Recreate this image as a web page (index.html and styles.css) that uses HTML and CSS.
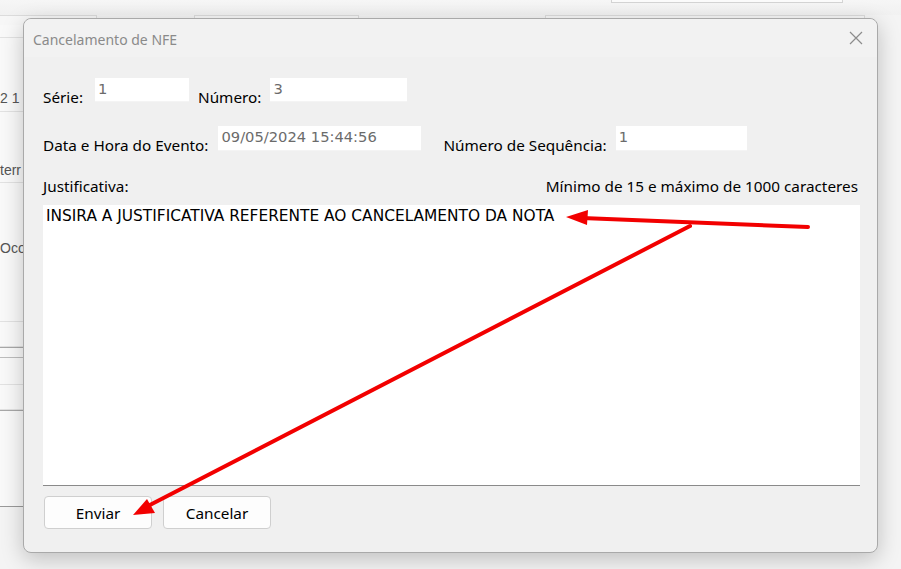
FILE: index.html
```html
<!DOCTYPE html>
<html lang="pt-BR">
<head>
    <meta charset="UTF-8">
    <meta name="viewport" content="width=device-width, initial-scale=1.0">
    <title>Cancelamento de NFE</title>
    <link rel="stylesheet" href="styles.css">
</head>
<body>
    <!-- app window behind the dialog -->
    <div class="backdrop">
        <div class="top-strip">
            <div class="top-box"></div>
        </div>
        <div class="tabs">
            <div class="tab tab-a"></div>
            <div class="tab tab-b"></div>
            <div class="tab tab-c"></div>
        </div>
        <div class="side">
            <div class="side-row">&nbsp;</div>
            <div class="side-row r2">2 1</div>
            <div class="side-row r3">terr</div>
            <div class="side-row r4">Oco</div>
            <div class="side-row r5"></div>
            <div class="side-row r6 dark"></div>
            <div class="side-row r7"></div>
            <div class="side-row r8"></div>
            <div class="side-row r9 dark"></div>
        </div>
    </div>

    <div class="dialog">
        <div class="titlebar">
            <span class="title">Cancelamento de NFE</span>
            <svg class="close" width="14" height="14" viewBox="0 0 14 14">
                <path d="M1 1 L13 13 M13 1 L1 13" stroke="#8c8c8c" stroke-width="1.2" fill="none"/>
            </svg>
        </div>

        <div class="form">
            <div class="row row1">
                <label class="lbl">Série:</label>
                <div class="field f-serie">1</div>
                <label class="lbl">Número:</label>
                <div class="field f-numero">3</div>
            </div>

            <div class="row row2">
                <label class="lbl">Data e Hora do Evento:</label>
                <div class="field f-data">09/05/2024 15:44:56</div>
                <label class="lbl lbl-seq">Número de Sequência:</label>
                <div class="field f-seq">1</div>
            </div>

            <div class="row row3">
                <span class="lbl">Justificativa:</span>
                <span class="lbl hint">Mínimo de 15 e máximo de 1000 caracteres</span>
            </div>

            <div class="memo">INSIRA A JUSTIFICATIVA REFERENTE AO CANCELAMENTO DA NOTA</div>

            <div class="buttons">
                <button class="btn">Enviar</button>
                <button class="btn">Cancelar</button>
            </div>
        </div>
    </div>

    <!-- red annotation arrows -->
    <svg class="arrows" width="901" height="569" viewBox="0 0 901 569">
        <g stroke="#f20000" stroke-width="4" stroke-linecap="round" fill="none">
            <line x1="808" y1="227" x2="582" y2="218"/>
            <line x1="690" y1="226" x2="146" y2="507"/>
        </g>
        <g fill="#f20000">
            <polygon points="566,217 588,210 587,225"/>
            <polygon points="133,515 147,499 155,513"/>
        </g>
    </svg>
</body>
</html>
```

FILE: styles.css
```css
* {
    box-sizing: border-box;
}

body {
    margin: 0;
    width: 901px;
    height: 569px;
    overflow: hidden;
    background: #f3f3f3;
    font-family: "Noto Sans", "Open Sans", sans-serif;
    font-size: 15.3px;
    color: #000;
    position: relative;
}

/* ---- background window ---- */
.backdrop {
    width: 100%;
    height: 100%;
    background: #f4f4f4;
}

.top-strip {
    height: 15px;
    position: relative;
    background: linear-gradient(#f6f6f6, #f1f1f1);
}

.top-box {
    position: absolute;
    left: 611px;
    top: -2px;
    width: 232px;
    height: 5px;
    border: 1px solid #d4d4d4;
    background: #fbfbfb;
}

.tabs {
    height: 10px;
    position: relative;
}

.tab {
    position: absolute;
    top: 0;
    height: 10px;
    border: 1px solid #dcdcdc;
    border-bottom: none;
    background: #f7f7f7;
}

.tab-a { left: -2px; width: 99px; }
.tab-b { left: 194px; width: 165px; }
.tab-c { left: 545px; width: 320px; }

.side {
    width: 23px;
    background: #f9f9f9;
    font-family: "Liberation Sans", sans-serif;
    font-size: 14px;
    color: #555;
}

.side-row {
    border-bottom: 1px solid #e2e2e2;
    height: 13px;
}

.side-row.r2 { height: 74px; padding-top: 50px; line-height: 20px; }
.side-row.r3 { height: 71px; padding-top: 48px; line-height: 20px; }
.side-row.r4 { height: 139px; padding-top: 55px; line-height: 20px; }
.side-row.r5 { height: 25px; }
.side-row.r6 { height: 11px; border-bottom-color: #bdbdbd; }
.side-row.r7 { height: 27px; }
.side-row.r8 { height: 25px; }
.side-row.r9 { height: 97px; border-bottom-color: #9a9a9a; }

.side-row.dark { border-top: 1px solid #a8a8a8; }

/* ---- dialog ---- */
.dialog {
    position: absolute;
    left: 23px;
    top: 18px;
    width: 855px;
    height: 535px;
    background: #f0f0f0;
    border: 1px solid #a9a9a9;
    border-radius: 8px;
    box-shadow: 0 6px 22px rgba(0, 0, 0, 0.22);
}

.titlebar {
    height: 38px;
    display: flex;
    align-items: center;
    justify-content: space-between;
    padding: 0 14px 0 9px;
    background: #f2f2f2;
    border-radius: 8px 8px 0 0;
}

.title {
    font-size: 14px;
    color: #8a8a8a;
    margin-top: 2px;
}

.close {
    display: block;
}

.form {
    padding: 21px 16px 0 19px;
}

.row {
    display: flex;
    align-items: flex-start;
}

.lbl {
    line-height: 20px;
    white-space: nowrap;
}

.field {
    background: #fff;
    color: #6b6b6b;
    font-family: "DejaVu Sans", sans-serif;
    font-size: 14.7px;
    padding: 1px 3px;
    line-height: 20px;
    height: 24px;
    border-bottom: 1px solid #f4f4f4;
}

.row1 {
    height: 24px;
}
.row1 .lbl { margin-top: 9px; }
.row1 .lbl:first-child { margin-right: 12px; }
.f-serie { width: 94px; margin-right: 9px; }
.row1 .lbl + .f-numero { margin-left: 9px; }
.f-numero { width: 137px; }

.row2 {
    margin-top: 24px;
    height: 25px;
}
.row2 .lbl { margin-top: 9px; }
.f-data { width: 203px; height: 25px; margin-left: 10px; }
.lbl-seq { margin-left: 22px; }
.f-seq { width: 131px; height: 25px; margin-left: 9px; }

.row3 {
    margin-top: 25px;
    height: 20px;
    justify-content: space-between;
    width: 815px;
}

.memo {
    margin-top: 9px;
    width: 817px;
    height: 281px;
    background: #fff;
    border-bottom: 1px solid #8a8a8a;
    padding: 1px 3px;
    font-family: "DejaVu Sans", sans-serif;
    font-size: 15.4px;
    line-height: 20px;
    color: #000;
}

.buttons {
    display: flex;
    gap: 11px;
    margin-top: 10px;
    padding-left: 1px;
}

.btn {
    width: 108px;
    height: 33px;
    background: #fdfdfd;
    border: 1px solid #cfcfcf;
    border-radius: 4px;
    font-family: "Noto Sans", sans-serif;
    font-size: 15.3px;
    color: #000;
    padding: 0;
}

/* ---- annotation overlay ---- */
.arrows {
    position: absolute;
    left: 0;
    top: 0;
    pointer-events: none;
}
```
